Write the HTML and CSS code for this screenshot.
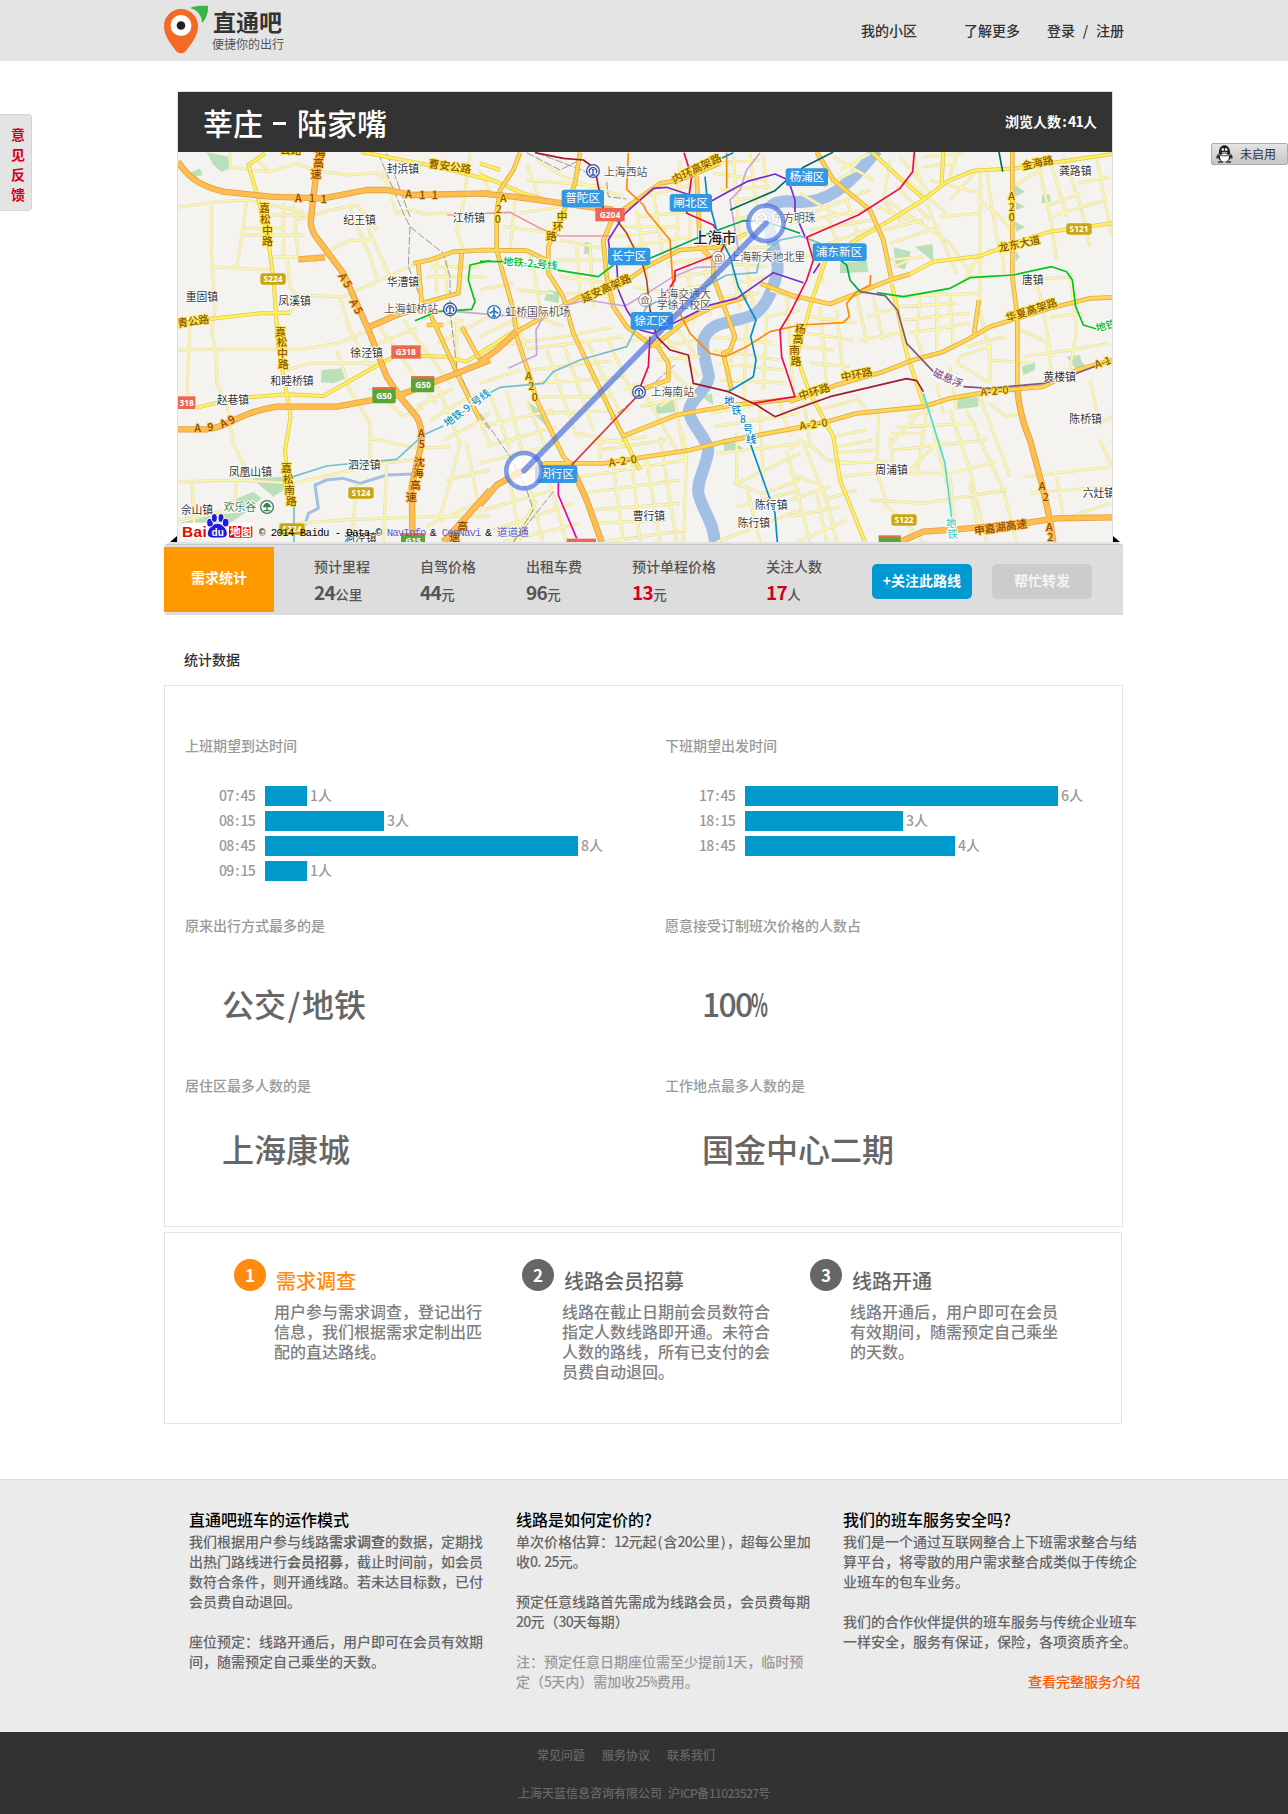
FILE: index.html
```html
<!DOCTYPE html>
<html lang="zh-CN">
<head>
<meta charset="utf-8">
<title>直通吧 - 莘庄 - 陆家嘴</title>
<link rel="stylesheet" href="styles.css">
</head>
<body>
<header class="top">
  <div class="wrap top-in">
    <svg class="pin" width="46" height="50" viewBox="0 0 46 50">
      <path d="M17 4C7 4 0 12 0 21c0 10 7 18 12 25 3 3 7 3 10 0 5-7 12-15 12-25C34 12 27 4 17 4z" fill="#f26a24"/>
      <circle cx="17" cy="20.500" r="10.500" fill="#fff"/><circle cx="17" cy="20.500" r="4.300" fill="#231f20"/>
      <path d="M26 3C32 .5 38 .7 44 1c.4 7-2 13-6 17C38 11 34 5 26 3z" fill="#3bb54a"/>
    </svg>
    <div class="brand"><b>直通吧</b><span>便捷你的出行</span></div>
    <nav class="nav"><a>我的小区</a><a>了解更多</a><span class="login"><a>登录</a><i>/</i><a>注册</a></span></nav>
  </div>
</header>

<main class="wrap">
  <section class="route">
    <div class="route-head"><h1>莘庄<i></i>陆家嘴</h1><b>浏览人数<i class="c">:</i><span class="h">41</span>人</b></div>
    <svg class="map" width="934" height="390" viewBox="24 6 2802 1170" preserveAspectRatio="none">
      <defs>
        <g id="minor">
          <path d="M24 172L140 155 230 150 300 165 400 185M124 165V300L130 400M230 150L220 230 200 355M130 350L200 355 310 360M130 400L135 480 125 545 138 610 140 700 170 765 185 850 190 880 240 980M24 600L150 598 400 598 500 580 590 545M60 520L52 700 55 770M180 10V50L240 60 300 65M260 30L300 65 380 40 430 60 530 75 620 68 700 140M340 160V320M370 165L385 320M300 195H440M345 235H225M215 255H400M380 210L480 180 560 165 620 240 M610 268L540 272 490 295 430 340M540 175L600 320 620 385M580 180L600 250 660 380M310 320H390M350 320L360 410 380 435 520 440 730 345M640 60L680 190 730 180 760 192 860 190M510 440L540 540 600 650M360 490L400 440M740 535L600 590M620 520L680 600 740 690 800 760M700 510L780 620 840 700M350 660L420 640 620 640M500 600L540 720 600 820V930M600 865L740 895 840 890M640 740L700 800 760 770M24 995L200 990 370 1000 640 940 730 930M66 1000L75 1170M200 990L195 1050 130 1120 M560 1000L545 1176M24 1110L180 1080M380 1120L520 1110 760 1100 960 1098M780 810L900 740 960 720M740 770L850 715M800 700L870 880 840 1000 810 1100M880 700L960 880M820 870L900 830 960 790M830 990L960 960M890 880L930 1090M650 950L640 1176M770 1130L960 1040M780 350H930M770 380H950M800 330V430M830 330V430M900 10L880 160 860 240 880 300M860 500V660M800 580L960 500M930 60L960 130M830 520L880 510"/>
          <path transform="translate(930 0)" d="M140 40L180 150M170 30L250 80 330 110 430 140M140 90L380 110M120 190L240 170M70 230L220 250M110 110L90 300M240 270L390 300M210 330L370 330M240 380L400 400M260 430L410 440M290 290L300 430M330 280L340 470M370 280L390 470M150 300L180 470M110 420L220 430M120 480L250 530M60 350L140 600M0 420L100 400M0 560L120 500M20 590L250 560 400 530M120 600L430 560M150 660L420 630M170 700L440 680M180 740L400 740M200 790L450 780M200 600L290 860M250 580L340 840M320 570L420 790M380 560L460 740M420 230H600M400 260L560 240M440 290L630 260M470 180L500 380M520 130L550 330M600 30L590 300M630 90V300M460 150L650 100M470 200L700 180M560 340L730 320M590 380L730 360M600 420L700 400M600 460L690 440M620 330L640 520M670 300L690 500M460 410L560 430M540 460L620 520M560 490L650 620M540 540L660 680M540 590L650 570M530 630L660 620M560 650L650 740M540 770L640 700M430 580L510 560M450 480L560 560M480 770L610 740M500 740L600 920M580 730L620 950M430 720L470 700M690 40L840 30M700 70L860 90M720 120L870 110M760 150L860 140M760 20L780 280M810 10L830 170M850 20L860 120M760 210L850 190M720 300L880 290M730 340L860 350M760 400L860 380M730 440L840 430M760 360L780 480M800 350L820 470M700 560L880 580M700 600L900 630M720 640L910 660M720 690L920 700M760 540L740 760M800 520L790 780M860 490L850 720M920 430L940 730M870 420L960 450M860 500L960 480M690 790L960 740M700 830L960 790M710 910L960 880M840 780L850 1000M900 760L930 860M770 850L770 1000L960 910M760 1000L850 1030 960 990M770 1070L960 1020M710 1176L960 1080M800 1010L840 1176M920 900L960 1060M290 850L430 880M360 870V930M340 880L500 860M360 900L560 870M450 880L480 1176M540 860L590 1176M610 850L620 920 610 1176M300 980L620 930M310 1030L600 990M330 1080L600 1060M340 1120L560 1110M370 1176L620 1140M400 950L430 1176M500 930L540 1176M0 700L120 660M0 830L220 780M20 890L230 830M0 940L240 880M80 720L150 1000M30 730L90 900M140 750L200 900M10 1080L220 1020M40 1140L280 1060M70 1176L300 1120M90 990L120 1176M150 1020L190 1176M210 1000L260 1176M170 1050L100 1176"/>
          <path transform="translate(1860 0)" d="M130 20L250 90M150 60L240 10M100 110L200 60M30 130L150 200M60 190L240 120M0 220L230 180M60 240L250 210M90 290L260 230M20 320L130 310M60 250L100 400M110 190L150 300M170 150L210 280M300 30L280 150 340 230M330 20L420 130M370 10L390 90M400 20L520 10M400 50L500 40M500 10L480 80M420 90L570 130M290 150L480 280M260 170L380 220M320 110L420 210M350 90L470 190M450 200L570 190M280 240L400 210M300 280L450 230M410 160L430 210 500 370M480 280L540 370M570 60V450M480 150L570 50M570 150L640 210 660 240M590 70L620 260 640 330M670 110L750 60M740 20L780 200 800 330M780 30L830 200M820 20L870 160 900 290M865 100L960 80M770 170L870 130M780 200L950 150M920 20L940 130 966 260M540 350L600 300 650 310M540 380H620M520 400L560 330M640 330V370M290 330L400 320M310 350L360 330M300 440L570 430M320 470L500 460M230 500L330 470M210 570L330 550M200 430L230 580M250 440L280 570M140 480L160 680M90 470L110 700M60 500L200 520M50 550L190 570M40 590L130 600M60 640L180 650M390 440L380 560 400 620M440 430V600M480 430L490 600M340 510L540 490M360 550L540 520M570 480L600 620M530 590L600 570 650 560M500 640L510 620 600 590M500 640L600 700M600 580V700M600 630L720 640M690 540L760 570M740 400L760 480 780 600M840 370L860 540M700 390L850 380M780 500L880 490M700 620L840 600 960 580M770 570L790 700M860 540L840 660M900 690L930 830M930 820L966 800M930 870L966 950M700 980L960 950M720 1030L960 1010M800 980L820 1100M840 1100L960 1060M0 900L30 870 80 900 110 930M40 740L60 880M80 780L200 750M0 780L90 750M130 860L230 840M140 890L250 870M130 910L250 900M150 940L290 935M150 980L250 970M110 930L200 940M200 740L240 800M265 790L260 960 290 1060M300 860L310 970M300 880L380 800M300 850H400M320 830L560 820M350 800L430 780M360 960L450 870M320 970H480L620 935M310 900L590 870M240 1050L400 1060 650 1020M280 1060L340 1110 400 1176M410 790L380 980M430 840L470 1000M480 780L540 960 590 1176M530 780L640 1020 680 1176M570 740L660 980M600 760L650 800 690 790M480 980L500 1176M0 970L100 1010M40 880L110 1050 140 1176M100 1050L200 1020M0 1050L120 1010M0 1100L150 1070M20 1176L170 1110M30 1060L60 1176M80 1030L110 1176M480 650L500 780M440 700L460 790M540 1000L560 1120"/>
        </g>
        <g id="yellow">
          <path d="M285 10L235 45 260 130 290 240 310 380 325 590 350 730 362 800 345 900 360 1060M24 530L110 508 270 490 360 488M80 773L200 745 350 733 460 738 580 670 680 615 820 620 890 635 960 590M575 6L800 50 960 90"/>
          <path transform="translate(930 0)" d="M0 75L130 130 250 165M0 610L100 545M700 300L800 250M430 860L480 960M60 60L0 40"/>
          <path transform="translate(1860 0)" d="M180 280L260 235 400 150 470 95 550 62 680 55 966 12M460 6L455 100M245 6L330 85 400 145M360 372L430 335 570 318 670 280 780 245 966 220M110 320L60 470 20 620 60 730 130 860 150 990 225 1176M305 400L350 610 400 760"/>
        </g>
        <g id="ring">
          <path d="M730 340L780 330 850 305 960 300M745 340L755 460M875 310L865 430 755 460M780 490L830 600 870 690 930 810M875 530L930 630M770 525H820"/>
          <path transform="translate(930 0)" d="M120 8L100 60 60 120 50 190V300L100 480 110 560 150 680 170 750 250 920 270 940M0 1065L50 1005 130 960 200 940H370L630 900 730 875 960 832M300 8L285 100 245 200 205 290V370L250 440 280 550 400 800 430 858 590 795 760 765 960 745M400 200L540 100 600 90 720 40M650 80L660 290 700 330V380L765 560 750 600 730 610 755 720M400 200L370 270 380 380 400 470 440 530 520 590M110 545L300 440 450 385 500 350 600 300 730 290M520 590L620 510 700 470 800 440M0 300L140 302 200 330M840 400L960 445M520 570L565 640V690L480 720"/>
          <path transform="translate(1860 0)" d="M0 755L140 705 280 665 370 630 460 605 530 570 600 530 780 475 900 445 966 442M0 838L110 815 200 790 400 770 480 745 600 725 760 710 860 660 966 630M80 6L130 90 240 180 280 270 305 390M0 435L120 462 200 430 300 390 360 372M667 6V380L682 500V710M567 450L552 550"/>
        </g>
        <g id="orange">
          <path d="M24 35C60 90 100 110 160 125L300 140 460 145 590 120H650L730 135 960 130M448 6L430 140 422 220Q425 245 445 270L520 370 560 460 600 550 650 680 690 740 740 800Q755 830 755 860L750 900 725 1010 728 1176M385 328L465 322M24 838H110C180 830 200 790 320 770H500L690 735 860 670 960 630M600 530L680 495 740 475M820 1176L890 1100 960 1020"/>
          <path transform="translate(930 0)" d="M0 130L100 140 250 160 400 180M0 635L50 600 110 545M0 1065L50 1005 130 960M270 940L320 1050 365 1176"/>
          <path transform="translate(1860 0)" d="M682 720Q690 800 720 870L755 1000 780 1110 790 1176M330 1176L400 1145 500 1138 700 1120 800 1105 966 1102"/>
        </g>
        <g id="station"><circle r="19" fill="#fff" stroke="#3953a4" stroke-width="4"/><path d="M-9 7A11 11 0 1 1 9 7M-8 12H8M0-5V12M-4-4H4" fill="none" stroke="#3953a4" stroke-width="4"/></g>
        <g id="museum"><circle r="19" fill="#fff" stroke="#a08c84" stroke-width="3"/><path d="M-11-3L0-11 11-3zM-8 0V8M0 0V8M8 0V8M-11 10H11" fill="none" stroke="#8a6f66" stroke-width="3"/></g>
      </defs>
      <rect x="24" y="6" width="2802" height="1170" fill="#f4f3f0"/>
      <g class="park">
        <path d="M110 6L175 20 180 55 155 66 130 45zM60 70L90 55 98 75 75 80zM455 660L525 655 528 685 490 700 453 697zM245 985L345 980 340 1020 310 1040zM190 1050L250 1025 275 1045 230 1080zM24 1120L130 1095 230 1085 180 1120z"/>
        <path transform="translate(930 0)" d="M205 420L240 425 235 460 192 450zM315 275L335 280 333 310 312 312zM145 755L190 790 200 830 150 780zM530 765L580 750 590 785 525 792zM665 740L695 730 700 765zM730 880L760 875 790 895 735 910z"/>
        <path transform="translate(1860 0)" d="M150 340L230 330 235 365 150 370zM310 292L362 305 345 358 318 350zM375 290L428 282 430 335zM675 105L705 125 675 140zM755 135L780 133 782 155 755 160zM677 155L705 170 678 180zM675 215L705 230 678 245zM675 300L690 320 677 335zM695 650L735 637 735 660 700 675zM830 620L870 615 875 635 895 655 860 660zM505 745L565 742 565 770 500 778z"/>
      </g>
      <g class="water">
        <path d="M405 1125L415 1090 445 1075 435 1005 470 990 520 985 570 1000 650 975 730 972" stroke-width="9"/>
        <path transform="translate(930 0)" d="M1190 0C1100 120 1030 165 940 155C890 150 860 165 862 200C870 270 895 310 893 360C880 420 860 470 820 495C770 515 710 515 685 545C655 575 675 620 687 680C680 725 630 745 626 785C635 830 680 860 685 900C680 950 650 990 655 1030C670 1090 700 1110 705 1180" stroke-width="36"/>
      </g>
      <use href="#minor" class="minor-case"/><use href="#minor" class="minor"/>
      <g class="rail"><path d="M625 10L700 190 720 230 820 310 840 380V480L860 650 930 800 960 840M650 10L720 200M720 230L715 350 750 440 850 640"/><path transform="translate(930 0)" d="M0 790L90 920 140 1020 160 1080 100 1176M220 1025L100 1176M390 810L585 645M140 8L240 60 300 30M170 8L330 70M380 95L385 140 440 147"/></g>
      <use href="#yellow" class="yellow-case"/><use href="#yellow" class="yellow"/>
      <use href="#ring" class="ring-case"/><use href="#ring" class="ring"/>
      <use href="#orange" class="orange-case"/><use href="#orange" class="orange"/>
      <g class="metro">
        <g stroke="#00c41d"><path d="M735 512L800 485 905 478 915 455 895 390 900 345 960 332"/><path transform="translate(930 0)" d="M0 334L70 335 355 380 400 345"/><path transform="translate(1860 0)" d="M260 428L340 440 480 415 540 383 670 375 785 350 830 365 847 390 857 470 880 525 920 537"/></g>
        <g stroke="#72bfd0"><path d="M370 980L470 948 530 942 680 928 760 855 820 828M372 1050V1176"/><path transform="translate(930 0)" d="M0 745L60 712 190 700 220 665 300 630 440 590 465 540 500 470 540 450 640 430 740 375 830 368 840 320 900 270 960 258 1020 280"/></g>
        <path stroke="#c8a5d8" d="M860 485L1100 505 1170 470 1250 450 1365 468 1430 430 1510 380 1580 352 1650 350M1015 655L1100 615 1098 540 1120 500M1770 8L1730 60 1710 120 1680 150 1705 300"/>
        <path stroke="#ec9b9b" d="M832 195L1020 187 1110 235 1170 258H1320"/>
        <g transform="translate(930 0)">
          <path stroke="#a01a32" d="M165 8L250 25 310 30 345 55 355 110 370 180M510 480L530 560 570 600 625 615 640 700 745 725 830 765 885 800 930 783 1050 740 1280 686 1310 692 1330 725"/>
          <path stroke="#b84420" d="M410 210L440 250 490 350 500 390 510 480"/>
          <path stroke="#7d2bc8" d="M435 190L520 115 560 112 690 155 800 95 885 72 925 90 945 150V190L975 260M435 190L385 270 390 310 410 340 415 420 440 480 480 540 520 550 600 510 690 465 770 445 880 368 970 398M1000 370L1020 340"/>
          <path stroke="#ff8a00" d="M445 8L440 118 490 165 500 185 570 270 580 420M600 490L630 550 690 610 735 620 800 590 870 545 960 525 1090 518 1108 500 1100 460 1130 426 1170 405 1172 375M740 8V115"/>
          <path stroke="#ed0754" d="M612 8L635 80 620 190 700 225 735 280 720 310 585 362V390L550 440M1303 6L1298 65 1260 115 1135 195 980 262 1000 330 980 390 930 490 900 540 905 620 945 740 820 760M510 560L505 650 475 725"/>
          <path stroke="#d4323a" d="M475 735L275 945"/><path stroke="#f000a8" d="M235 990V1035L290 1165"/>
          <path stroke="#00a650" d="M510 325L650 265 700 245 790 212 860 215 960 250M1080 330L1100 345 1110 390 1140 425"/>
          <path stroke="#00695c" d="M750 180L885 122 920 90 970 52 1060 6M1557 6L1568 65"/>
          <path stroke="#008ccf" d="M675 80L680 130 710 240 750 320 775 410 828 510 812 560 828 630 820 680 745 725M800 850L885 1090 892 1176M725 25L760 8"/>
          <path stroke="#825781" d="M1140 425L1215 437 1252 480 1280 580 1360 665M1450 710L1530 715 1690 700 1790 670 1890 632"/>
          <path stroke="#48ddd3" d="M1330 730L1395 940 1415 1105"/>
        </g>
      </g>
      <g class="town">
        <text x="650" y="69">封浜镇</text><text x="520" y="222">纪王镇</text><text x="848" y="215">江桥镇</text><text x="650" y="407">华漕镇</text><text x="47" y="452">重固镇</text><text x="325" y="464">凤溪镇</text><text x="642" y="489" class="gray">上海虹桥站</text><text x="541" y="622">徐泾镇</text><text x="301" y="706">和睦桥镇</text><text x="140" y="762">赵巷镇</text><text x="534" y="956">泗泾镇</text><text x="176" y="978">凤凰山镇</text><text x="32" y="1091">佘山镇</text><text x="161" y="1084" fill="#3f7f57">欢乐谷</text><text x="522" y="1176">洞泾镇</text>
        <text x="1302" y="77" class="gray">上海西站</text><text x="1006" y="498" class="gray">虹桥国际机场</text><text x="1460" y="444" class="gray">上海交通大</text><text x="1460" y="477" class="gray">学徐汇校区</text><text x="1442" y="739" class="gray">上海南站</text><text x="1678" y="334" class="gray">上海新天地北里</text><text x="1807" y="217" class="gray">东方明珠</text><text x="1388" y="1110">曹行镇</text><text x="1755" y="1076">陈行镇</text><text x="1703" y="1131">陈行镇</text>
        <text x="2667" y="75">龚路镇</text><text x="2556" y="402">唐镇</text><text x="2620" y="692">黄楼镇</text><text x="2698" y="818">陈桥镇</text><text x="2116" y="973">周浦镇</text><text x="2738" y="1041">六灶镇</text>
        <text x="1570" y="278" class="city">上海市</text>
      </g>
      <g class="road">
        <text transform="translate(775 52) rotate(8)">曹安公路</text><text x="330" y="12">公路</text>
        <text x="268 270 277 277" y="187 219 252 285">嘉松中路</text><text x="316 320 322 324" y="557 589 622 655">嘉松中路</text><text x="334 339 343 348" y="965 998 1031 1064">嘉松南路</text>
        <text transform="translate(24 532) rotate(-8)">青公路</text>
        <text transform="translate(1513 101) rotate(-26)">内环高架路</text><text transform="translate(1240 458) rotate(-24)">延安高架路</text>
        <text x="1160 1148 1128" y="209 240 270">中环路</text><text x="1875 1868 1858 1862" y="550 580 612 645">杨高南路</text>
        <text transform="translate(1890 750) rotate(-17)">中环路</text><text transform="translate(2015 694) rotate(-11)">中环路</text><text transform="translate(2512 516) rotate(-18)">华夏高架路</text><text transform="translate(2488 306) rotate(-12)">龙东大道</text><text transform="translate(2558 60) rotate(-12)">金海路</text>
        <text transform="translate(1318 950) rotate(-8)" textLength="85">A-2-0</text><text transform="translate(1890 840) rotate(-8)" textLength="85">A-2-0</text><text transform="translate(2432 738) rotate(-5)" textLength="85">A-2-0</text><text transform="translate(2778 656) rotate(-18)">A-1</text>
        <text x="990 977 974" y="157 188 219">A20</text><text x="1066 1075 1085" y="690 720 752">A20</text><text x="2515 2516 2516" y="150 182 213">A20</text>
      </g>
      <g class="road high">
        <text x="434 430 422" y="20 50 84">海高速</text><text x="375 417 452" y="155 156 158">A11</text><text x="706 748 785" y="145 148 147">A11</text><text transform="translate(504 378) rotate(58)">A 5</text><text transform="translate(538 455) rotate(62)">A 5</text><text x="73 112" y="847 843">A9</text><text transform="translate(157 835) rotate(-26)">A 9</text><text x="744 746 732 728 720 708" y="862 894 947 980 1018 1054">A5沈海高速</text>
        <text x="862 838" y="1140 1172">高速</text><text transform="translate(2414 1154) rotate(-8)" font-size="34">申嘉湖高速</text><text x="2606 2618" y="1020 1054">A2</text><text x="2628 2632" y="1144 1174">A2</text>
      </g>
      <g class="line-label">
        <text transform="translate(998 344) rotate(5)" fill="#00b52a">地铁-2-号线</text><text transform="translate(832 832) rotate(-37)" fill="#1293b5">地铁-9-号线</text><text x="1662 1684 1710 1718 1728" y="765 793 818 848 880" fill="#0c86bf">地铁8号线</text><text transform="translate(2287 676) rotate(24)" fill="#825781">磁悬浮</text><text x="2328 2332" y="1132 1165" fill="#48ccc3">地铁</text><text transform="translate(2780 545) rotate(-14)" fill="#00b52a">地铁</text>
      </g>
      <g class="shield">
        <g fill="#cba70e"><rect x="271" y="370" width="76" height="34" rx="7"/><rect x="535" y="1012" width="76" height="34" rx="7"/><rect x="328" y="1120" width="76" height="34" rx="7"/><rect x="2689" y="220" width="76" height="34" rx="7"/><rect x="2164" y="1093" width="76" height="34" rx="7"/></g>
        <g fill="#ee6650"><rect x="664" y="586" width="88" height="40"/><rect x="24" y="739" width="52" height="38"/><rect x="1276" y="174" width="88" height="40"/><rect x="1190" y="1166" width="88" height="20"/></g>
        <g fill="#59a538"><rect x="607" y="712" width="70" height="48" rx="5"/><rect x="723" y="679" width="70" height="48" rx="5"/><rect x="693" y="1150" width="72" height="40"/><rect x="2126" y="1157" width="66" height="40"/></g>
        <path d="M607 715H677M723 682H793M693 1153H765M2126 1160H2192" stroke="#f2654e" stroke-width="7"/>
        <text x="309" y="396">S224</text><text x="573" y="1038">S124</text><text x="366" y="1146">S224</text><text x="2727" y="246">S121</text><text x="2202" y="1118">S122</text><text x="707" y="615">G318</text><text x="50" y="768">318</text><text x="1320" y="203">G204</text><text x="642" y="747">G50</text><text x="759" y="714">G50</text><text x="730" y="1182">G15</text>
      </g>
      <use href="#station" x="840" y="478"/><use href="#station" x="1269" y="63"/><use href="#station" x="1407" y="726"/><use href="#museum" x="1645" y="323"/><use href="#museum" x="1425" y="450"/><use href="#museum" x="1774" y="205"/>
      <circle cx="972" cy="486" r="19" fill="#fff" stroke="#2c77b8" stroke-width="4"/><path d="M972 472V500M959 490L972 482 985 490M966 499H978" stroke="#2c77b8" stroke-width="5" fill="none"/>
      <circle cx="291" cy="1071" r="19" fill="#fff" stroke="#3f7f57" stroke-width="4"/><path d="M291 1062V1082M281 1070Q291 1050 301 1070zM281 1082H301" stroke="#3f7f57" stroke-width="4" fill="#3f7f57"/>
      <g class="district">
        <rect x="1175" y="119" width="127" height="53" rx="9"/><rect x="1499" y="132" width="127" height="53" rx="9"/><rect x="1314" y="293" width="127" height="53" rx="9"/><rect x="1382" y="486" width="127" height="53" rx="9"/><rect x="1095" y="946" width="127" height="53" rx="9"/><rect x="1847" y="55" width="127" height="53" rx="9"/><rect x="1928" y="280" width="162" height="53" rx="9"/>
        <text x="1238" y="157">普陀区</text><text x="1562" y="171">闸北区</text><text x="1377" y="330">长宁区</text><text x="1446" y="525">徐汇区</text><text x="1160" y="984">闵行区</text><text x="1911" y="93">杨浦区</text><text x="2007" y="318">浦东新区</text>
      </g>
      <g fill="#fff" fill-opacity=".7" stroke="#4169e1" stroke-opacity=".65"><circle cx="1062" cy="962" r="53" stroke-width="14"/><circle cx="1788" cy="220" r="53" stroke-width="14"/><path d="M1062 962L1788 220" stroke-width="17" stroke-linecap="round"/></g>
      <rect x="34" y="1118" width="218" height="48" rx="10" fill="#fff" fill-opacity=".9"/>
      <g class="baidu"><text x="36" y="1160" textLength="74">Bai</text><rect x="177" y="1128" width="70" height="35" rx="4" fill="#e10601"/><text x="179" y="1157" class="ditu">地图</text></g>
      <g fill="#2319dc" stroke="#fff" stroke-width="3"><path d="M142 1120C160 1120 172 1140 172 1150C172 1164 160 1165 142 1164C124 1165 112 1164 112 1150C112 1140 124 1120 142 1120z"/><ellipse cx="120" cy="1118" rx="10" ry="13"/><ellipse cx="133" cy="1104" rx="9" ry="13"/><ellipse cx="153" cy="1104" rx="9" ry="13"/><ellipse cx="167" cy="1118" rx="10" ry="13"/></g>
      <text x="143" y="1158" class="du">du</text>
      <g class="credit"><text x="267" y="1158" textLength="366">© 2014 Baidu - Data ©</text><text x="650" y="1158" fill="#6262cc">NavInfo</text><text x="780" y="1158">&amp;</text><text x="815" y="1158" fill="#6262cc">CenNavi</text><text x="946" y="1158">&amp;</text><text x="980" y="1158" fill="#6262cc" class="cjk">道道通</text></g>
    </svg>
    <i class="fold fold-l"></i><i class="fold fold-r"></i>
  </section>
  <section class="stats">
    <div class="tag">需求统计</div>
    <dl class="c1"><dt>预计里程</dt><dd><b>24</b>公里</dd></dl>
    <dl class="c2"><dt>自驾价格</dt><dd><b>44</b>元</dd></dl>
    <dl class="c3"><dt>出租车费</dt><dd><b>96</b>元</dd></dl>
    <dl class="c4 hot"><dt>预计单程价格</dt><dd><b>13</b>元</dd></dl>
    <dl class="c5 hot"><dt>关注人数</dt><dd><b>17</b>人</dd></dl>
    <a class="btn">+关注此路线</a><a class="btn off">帮忙转发</a>
  </section>

  <h2 class="sect">统计数据</h2>
  <section class="card data">
    <div class="cell time"><h3>上班期望到达时间</h3>
      <div class="row"><span class="t">07<i class="c">:</i>45</span><i class="bar" style="width:42px"></i><span>1人</span></div>
      <div class="row"><span class="t">08<i class="c">:</i>15</span><i class="bar" style="width:119px"></i><span>3人</span></div>
      <div class="row"><span class="t">08<i class="c">:</i>45</span><i class="bar" style="width:313px"></i><span>8人</span></div>
      <div class="row"><span class="t">09<i class="c">:</i>15</span><i class="bar" style="width:42px"></i><span>1人</span></div>
    </div>
    <div class="cell time"><h3>下班期望出发时间</h3>
      <div class="row"><span class="t">17<i class="c">:</i>45</span><i class="bar" style="width:313px"></i><span>6人</span></div>
      <div class="row"><span class="t">18<i class="c">:</i>15</span><i class="bar" style="width:158px"></i><span>3人</span></div>
      <div class="row"><span class="t">18<i class="c">:</i>45</span><i class="bar" style="width:210px"></i><span>4人</span></div>
    </div>
    <div class="cell mode"><h3>原来出行方式最多的是</h3><p>公交<i class="c">/</i>地铁</p></div>
    <div class="cell mode"><h3>愿意接受订制班次价格的人数占</h3><p><span class="h">100</span><i class="pct">%</i></p></div>
    <div class="cell place"><h3>居住区最多人数的是</h3><p>上海康城</p></div>
    <div class="cell place"><h3>工作地点最多人数的是</h3><p>国金中心二期</p></div>
  </section>

  <section class="card steps">
    <div class="step on"><b>1</b><div><h3>需求调查</h3><p>用户参与需求调查，登记出行<br>信息，我们根据需求定制出匹<br>配的直达路线。</p></div></div>
    <div class="step"><b>2</b><div><h3>线路会员招募</h3><p>线路在截止日期前会员数符合<br>指定人数线路即开通。未符合<br>人数的路线，所有已支付的会<br>员费自动退回。</p></div></div>
    <div class="step"><b>3</b><div><h3>线路开通</h3><p>线路开通后，用户即可在会员<br>有效期间，随需预定自己乘坐<br>的天数。</p></div></div>
  </section>
</main>

<section class="info">
  <div class="info-in">
    <article><h3>直通吧班车的运作模式</h3>
      <p>我们根据用户参与线路<b>需求调查</b>的数据，定期找<br>出热门路线进行<b>会员招募</b>，截止时间前，如会员<br>数符合条件，则开通线路。若未达目标数，已付<br>会员费自动退回。</p>
      <p>座位预定：线路开通后，用户即可在会员有效期<br>间，随需预定自己乘坐的天数。</p></article>
    <article><h3>线路是如何定价的<i class="c">?</i></h3>
      <p>单次价格估算：<span class="h">12</span>元起<i class="c">(</i>含<span class="h">20</span>公里<i class="c">)</i>，超每公里加<br>收<span class="h">0</span><i class="c dot">.</i><span class="h">25</span>元。</p>
      <p>预定任意线路首先需成为线路会员，会员费每期<br><span class="h">20</span>元（<span class="h">30</span>天每期）</p>
      <p class="note">注：预定任意日期座位需至少提前<span class="h">1</span>天，临时预<br>定（<span class="h">5</span>天内）需加收<span class="h">25</span><i class="pct">%</i>费用。</p></article>
    <article><h3>我们的班车服务安全吗<i class="c">?</i></h3>
      <p>我们是一个通过互联网整合上下班需求整合与结<br>算平台，将零散的用户需求整合成类似于传统企<br>业班车的包车业务。</p>
      <p>我们的合作伙伴提供的班车服务与传统企业班车<br>一样安全，服务有保证，保险，各项资质齐全。</p>
      <a class="more">查看完整服务介绍</a></article>
  </div>
</section>

<footer class="foot">
  <nav><a>常见问题</a><a>服务协议</a><a>联系我们</a></nav>
  <p>上海天蓝信息咨询有限公司<i class="c"> </i>沪<span class="icp">ICP</span>备<span class="h">11023527</span>号</p>
</footer>

<aside class="feedback">意<br>见<br>反<br>馈</aside>
<aside class="qq">
  <svg width="17" height="18" viewBox="0 0 17 18"><path d="M2 9C0 11 0 13 1 14L3 12zM15 9C17 11 17 13 16 14L14 12z" fill="#333"/><path d="M3 7C3-2 14-2 14 7L15 12C14 18 3 18 2 12z" fill="#222"/><ellipse cx="8.500" cy="12.500" rx="4.500" ry="4" fill="#fff"/><circle cx="6.800" cy="4.500" r="1.300" fill="#fff"/><circle cx="10.200" cy="4.500" r="1.300" fill="#fff"/><path d="M5 7.500Q8.500 6 12 7.500Q8.500 10 5 7.500z" fill="#aaa"/><path d="M2.500 9.500Q8.500 12 14.500 9.500" stroke="#777" stroke-width="1.600" fill="none"/><path d="M2 17H7M10 17H15" stroke="#555" stroke-width="2"/></svg>
  <span>未启用</span>
</aside>
</body>
</html>
```

FILE: styles.css
```css
* { box-sizing: border-box; margin: 0; padding: 0; }
body { position: relative; background: #fff; color: #333; font: 500 14px/20px "Noto Sans CJK SC", sans-serif; white-space: nowrap; }
i { font-style: normal; }
.wrap { width: 960px; margin: 0 auto; }
/* half-width latin characters, half an em each */
.h { letter-spacing: -.055em; }
.c { display: inline-block; width: .5em; text-align: center; }
.dot { text-align: left; }
.pct { display: inline-block; width: .5em; transform: scaleX(.55); transform-origin: 0 50%; font-weight: bold; }

.top { height: 61px; background: #e4e4e4; }
.top-in { display: flex; }
.pin { margin-top: 5px; }
.brand { display: flex; flex-direction: column; padding: 8px 0 0 3px; }
.brand b { font-size: 23px; line-height: 26px; }
.brand span { margin-left: -1px; font-size: 12px; font-weight: 400; line-height: 19px; color: #555; }
.nav { display: flex; margin-left: auto; padding-top: 20px; }
.nav > a { margin-right: 47px; }
.nav > a + a { margin-right: 27px; }
.login i { display: inline-block; width: 21px; text-align: center; }

.route { position: relative; width: 936px; margin: 30px 0 0 13px; border: 1px solid #ddd; border-bottom: 0; }
.route-head { display: flex; justify-content: space-between; align-items: center; height: 60px; padding: 0 15px 0 25px; background: #333; color: #fff; }
.route-head h1 { font-size: 30px; font-weight: 500; line-height: 56px; }
.route-head h1 i { display: inline-block; width: 13px; height: 3px; margin: 0 11px 10px 10px; background: #fff; }
.route-head > b { line-height: 56px; margin-top: -2px; }
.map { display: block; }
.map text { font-family: "Noto Sans CJK SC", sans-serif; font-weight: 400; }
.minor-case, .minor, .yellow-case, .yellow, .ring-case, .ring, .orange-case, .orange, .metro, .rail, .water { fill: none; stroke-linejoin: round; }
.minor-case { stroke: #e6dcc4; stroke-width: 9; }
.minor { stroke: #fcf8a4; stroke-width: 5; }
.yellow-case { stroke: #dec15a; stroke-width: 12; }
.yellow { stroke: #fff05a; stroke-width: 8; }
.ring-case { stroke: #e0ab48; stroke-width: 14; }
.ring { stroke: #ffd653; stroke-width: 9; }
.orange-case { stroke: #dda04a; stroke-width: 19; }
.orange { stroke: #ffbd4e; stroke-width: 14; }
.metro { stroke-width: 5; }
.rail { stroke: #999; stroke-width: 3; stroke-dasharray: 24 6; }
.water { stroke: #a3bfe4; }
.park { fill: #badfb9; }
.town text { font-size: 32.500px; fill: #333; paint-order: stroke; stroke: #fff; stroke-width: 5px; }
.town .gray { fill: #555; }
.town text[fill] { fill: #3f7f57; }
.town .city { font-size: 43px; font-weight: 500; fill: #222; }
.road text { font-size: 32px; font-weight: 500; fill: #8a5a00; paint-order: stroke; stroke: #ffe34a; stroke-width: 5px; }
.road.high text { fill: #8a4a00; stroke: #ffbd4e; }
.line-label text { font-size: 31px; font-weight: 500; paint-order: stroke; stroke: #fff; stroke-width: 6px; }
.map .shield text { font: bold 25px "Open Sans", sans-serif; fill: #fff; text-anchor: middle; }
.district rect { fill: #3298e3; }
.district text { font-size: 35px; fill: #fff; text-anchor: middle; }
.map .baidu text { font: bold 46px "Liberation Sans", sans-serif; fill: #e10601; }
.map .baidu .ditu { font: bold 33px "Noto Sans CJK SC", sans-serif; fill: #fff; }
.map .du { font: bold 30px "Liberation Sans", sans-serif; fill: #fff; text-anchor: middle; }
.map .credit text { font: 500 32px "Liberation Mono", monospace; letter-spacing: -2.500px; }
.map .credit .cjk { font: 32px "Noto Sans CJK SC", sans-serif; letter-spacing: 0; }
.fold { position: absolute; bottom: 0; width: 7px; height: 6px; background: #000; }
.fold-l { left: -8px; clip-path: polygon(100% 0, 100% 100%, 0 100%); }
.fold-r { right: -8px; clip-path: polygon(0 0, 100% 100%, 0 100%); }

.stats { display: flex; height: 73px; background: linear-gradient(#e2e2e2 0 2px, #c8c8c8 2px 3px, #ddd 3px); border-right: 1px solid #c8c8c8; clip-path: polygon(0 5px, 1px 3px, 5px 0, 955px 0, 959px 3px, 959px 100%, 1px 100%, 1px 70px, 0 70px); color: #555; }
.tag { width: 110px; height: 65px; margin-top: 5px; background: #ff9900; color: #fff; font-weight: bold; line-height: 60px; text-align: center; }
.stats dl { padding-top: 14px; }
.stats dd { line-height: 24px; margin-top: 4px; font-size: 13.500px; }
.stats dd b { font-size: 19px; letter-spacing: -.6px; }
.hot dd b { color: #d0021b; }
.c1 { width: 106px; margin-left: 40px; } .c2 { width: 106px; } .c3 { width: 106px; } .c4 { width: 134px; } .c5 { width: 106px; }
.btn { width: 100px; height: 35px; margin-top: 22px; border-radius: 5px; background: #0099d3; color: #fff; font-weight: bold; line-height: 33px; text-align: center; }
.off { margin-left: 20px; background: #ccc; color: #f4f4f4; }

.sect { margin: 34px 0 15px 20px; font-size: 14px; font-weight: 500; line-height: 21px; }
.card { border: 1px solid #e4e4e4; }
.data { display: grid; grid-template-columns: 480px 1fr; grid-template-rows: 180px 160px 1fr; height: 542px; width: 959px; padding: 49px 0 0 20px; color: #999; }
.cell h3 { font-size: 14px; font-weight: 500; line-height: 20px; }
.row { display: flex; height: 20px; margin-bottom: 5px; line-height: 19px; }
.time h3 { margin-bottom: 31px; }
.t { width: 46px; margin-left: 34px; letter-spacing: -.055em; }
.row .bar { background: #0099cc; margin-right: 3px; }
.cell p { margin: 45px 0 0 37px; font-size: 32px; line-height: 46px; color: #666; }
.place p { margin-top: 30px; }

.steps { display: flex; width: 958px; height: 192px; margin-top: 5px; padding: 26px 0 0 69px; }
.step { display: flex; width: 288px; }
.step > b { width: 32px; height: 32px; border-radius: 50%; background: #666; color: #fff; font-size: 17px; line-height: 31px; text-align: center; }
.step h3 { margin: 8px 0 0 10px; font-size: 20px; font-weight: 500; line-height: 28px; color: #666; }
.step p { margin: 6px 0 0 8px; font-size: 16px; line-height: 20px; color: #808080; }
.step.on > b { background: #ff8a0d; }
.step.on h3 { color: #ff8a0d; }

.info { height: 253px; margin-top: 55px; border-top: 1px solid #ddd; background: #ebebeb; }
.info-in { display: flex; gap: 30px; padding: 27px 0 0 189px; }
.info article { width: 297px; color: #666; }
.info h3 { font-size: 16px; font-weight: 500; line-height: 24px; color: #000; }
.info p { margin-bottom: 20px; }
.info .note { color: #999; }
.more { display: block; text-align: right; color: #ff5a00; }

.foot { height: 82px; padding-top: 13px; background: #323232; color: #666; font-size: 12px; }
.foot nav { display: flex; gap: 17px; padding-left: 537px; }
.foot p { margin-top: 18px; padding-left: 518px; }
.icp { letter-spacing: -.8px; }

.feedback { position: absolute; left: 0; top: 114px; width: 32px; height: 97px; padding: 9px 0 0 11px; border: 1px solid #d5d5d5; border-left: 0; border-radius: 0 4px 4px 0; background: #e4e4e4; color: #d0021b; font-weight: bold; }
.qq { position: absolute; right: 0; top: 143px; display: flex; align-items: center; width: 77px; height: 22px; padding-left: 4px; border: 1px solid #aaa; border-radius: 2px; background: linear-gradient(#e4e4e4, #c6c6c6); font-size: 12px; font-weight: 400; line-height: 18px; gap: 7px; }
```
